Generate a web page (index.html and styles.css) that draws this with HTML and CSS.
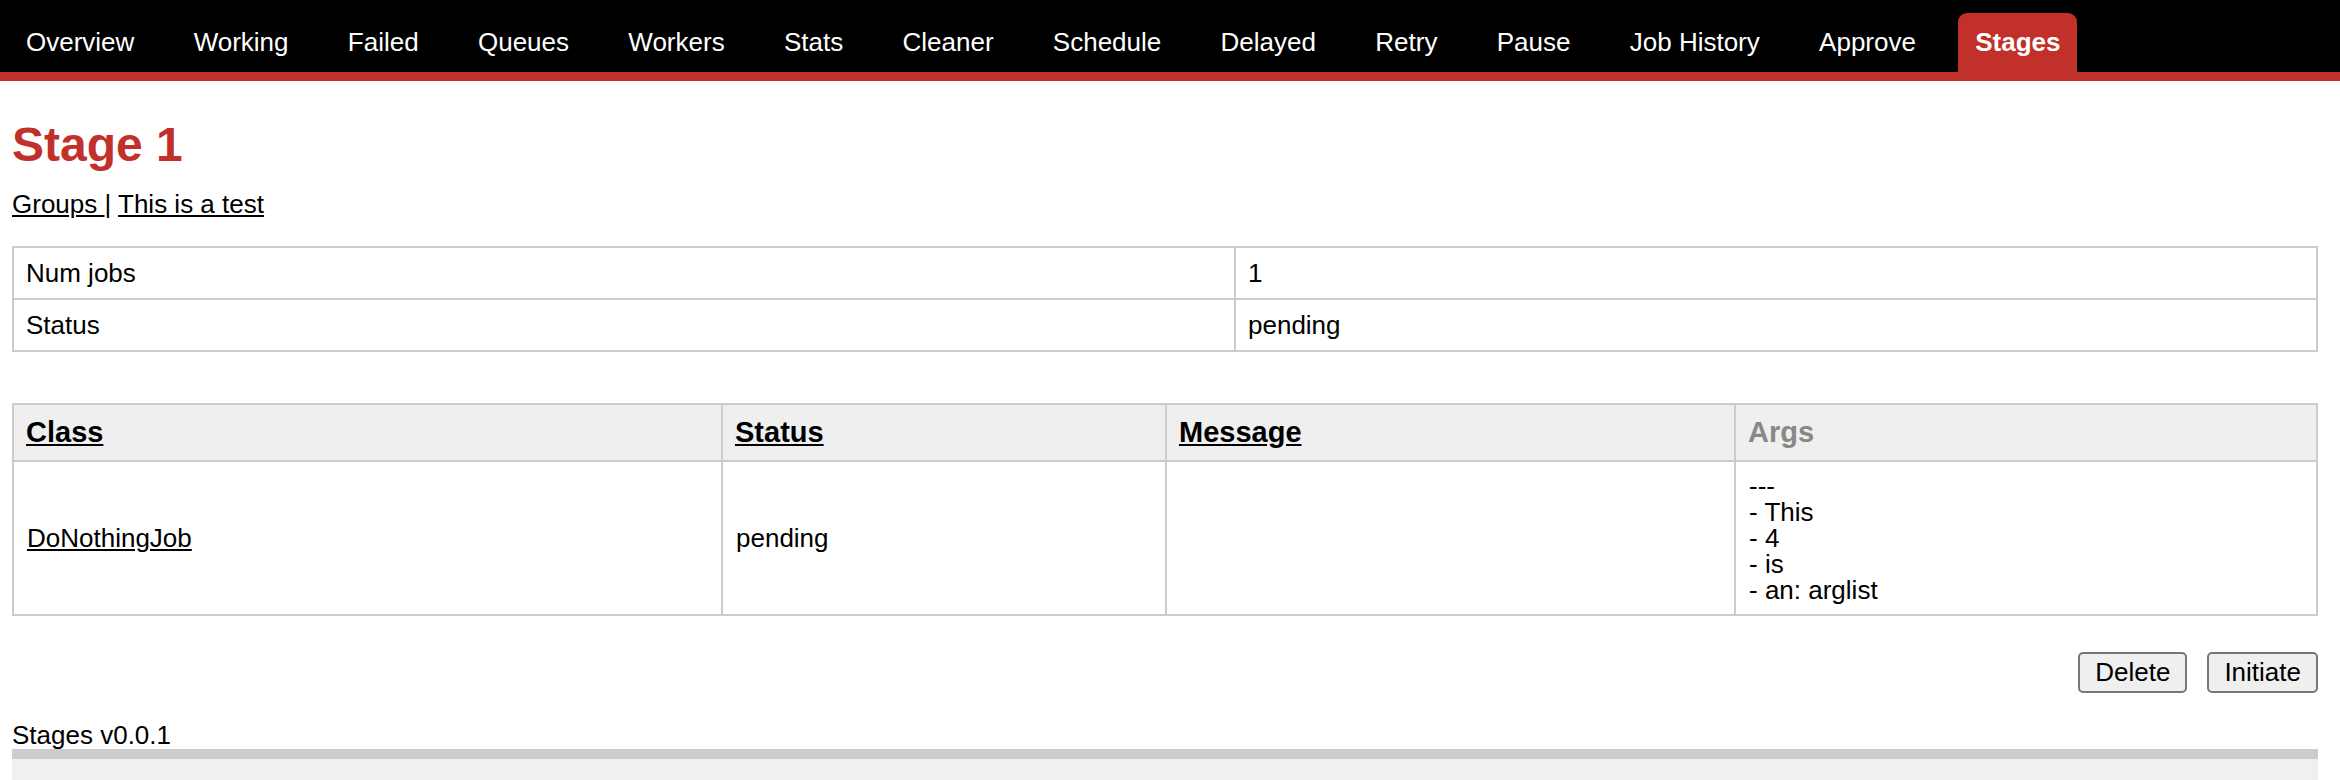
FILE: index.html
```html
<!DOCTYPE html>
<html lang="en">
<head>
    <meta charset="UTF-8">
    <meta name="viewport" content="width=device-width, initial-scale=1.0">
    <title>Stages</title>
    <link rel="stylesheet" href="styles.css">
</head>
<body>
    <div class="header">
        <ul class="nav">
            <li><a href="#">Overview</a></li>
            <li><a href="#">Working</a></li>
            <li><a href="#">Failed</a></li>
            <li><a href="#">Queues</a></li>
            <li><a href="#">Workers</a></li>
            <li><a href="#">Stats</a></li>
            <li><a href="#">Cleaner</a></li>
            <li><a href="#">Schedule</a></li>
            <li><a href="#">Delayed</a></li>
            <li><a href="#">Retry</a></li>
            <li><a href="#">Pause</a></li>
            <li><a href="#">Job History</a></li>
            <li><a href="#">Approve</a></li>
            <li class="current"><a href="#">Stages</a></li>
        </ul>
    </div>

    <div id="main">
        <h1>Stage 1</h1>
        <p class="crumbs"><a href="#">Groups </a>| <a href="#">This is a test</a></p>

        <table class="info">
            <tr>
                <td class="label">Num jobs</td>
                <td>1</td>
            </tr>
            <tr>
                <td class="label">Status</td>
                <td>pending</td>
            </tr>
        </table>

        <table class="jobs">
            <tr>
                <th class="col-class"><a href="#">Class</a></th>
                <th class="col-status"><a href="#">Status</a></th>
                <th class="col-message"><a href="#">Message</a></th>
                <th class="col-args">Args</th>
            </tr>
            <tr>
                <td><a href="#">DoNothingJob</a></td>
                <td>pending</td>
                <td></td>
                <td><pre class="args">---
- This
- 4
- is
- an: arglist</pre></td>
            </tr>
        </table>

        <div class="actions">
            <button>Delete</button>
            <button>Initiate</button>
        </div>

        <p class="version">Stages v0.0.1</p>
    </div>

    <div id="footer"></div>
</body>
</html>
```

FILE: styles.css
```css
*{
    box-sizing: border-box;
}
body{
    margin: 0;
    padding: 0;
    font-family: "Liberation Sans", Arial, Helvetica, sans-serif;
    font-size: 26px;
    line-height: 30px;
    color: #000;
    background: #fff;
}
a{
    color: #000;
}

/* top navigation */
.header{
    background: #000;
    padding-top: 13px;
    border-bottom: 9px solid #c1302a;
}
.nav{
    list-style: none;
    margin: 0;
    padding: 0 0 0 9px;
    display: flex;
}
.nav li a{
    display: block;
    color: #fff;
    text-decoration: none;
    padding: 0 17px;
    margin-right: 25.3px;
    line-height: 59px;
    border-radius: 9px 9px 0 0;
}
.nav li.current a{
    background: #c1302a;
    font-weight: bold;
}

/* content */
#main{
    padding: 0 22px 0 12px;
}
#main h1{
    margin: 36px 0 0 0;
    font-size: 48px;
    line-height: 56px;
    color: #c1302a;
}
.crumbs{
    margin: 16px 0 0 0;
}

#main table{
    width: 100%;
    border-collapse: collapse;
    table-layout: fixed;
}
#main td, #main th{
    border: 2px solid #ccc;
    text-align: left;
    vertical-align: middle;
}
.info{
    margin-top: 27px;
}
.info td{
    padding: 10px 12px;
}
.info td.label{
    width: 1222px;
}

.jobs{
    margin-top: 51px;
}
.jobs th{
    background: #efefef;
    font-size: 29px;
    line-height: 33px;
    padding: 11px 12px;
}
.jobs th.col-class{
    width: 709px;
}
.jobs th.col-status{
    width: 444px;
}
.jobs th.col-message{
    width: 569px;
}
.jobs th.col-args{
    color: #888;
}
.jobs td{
    padding: 11px 13px;
}
.args{
    margin: 0;
    font-family: inherit;
    font-size: 26px;
    line-height: 26px;
}

.actions{
    display: flex;
    justify-content: flex-end;
    gap: 20px;
    margin-top: 36px;
}
.actions button{
    font-family: "Liberation Sans", Arial, sans-serif;
    font-size: 26px;
    line-height: 29px;
    padding: 4px 15px;
    color: #000;
    background: #efefef;
    border: 2px solid #767676;
    border-radius: 5px;
}

.version{
    margin: 28px 0 0 0;
    line-height: 28px;
}

#footer{
    margin: 0 22px 0 12px;
    height: 60px;
    border-top: 10px solid #ccc;
    background: #f0f0f0;
}
```
